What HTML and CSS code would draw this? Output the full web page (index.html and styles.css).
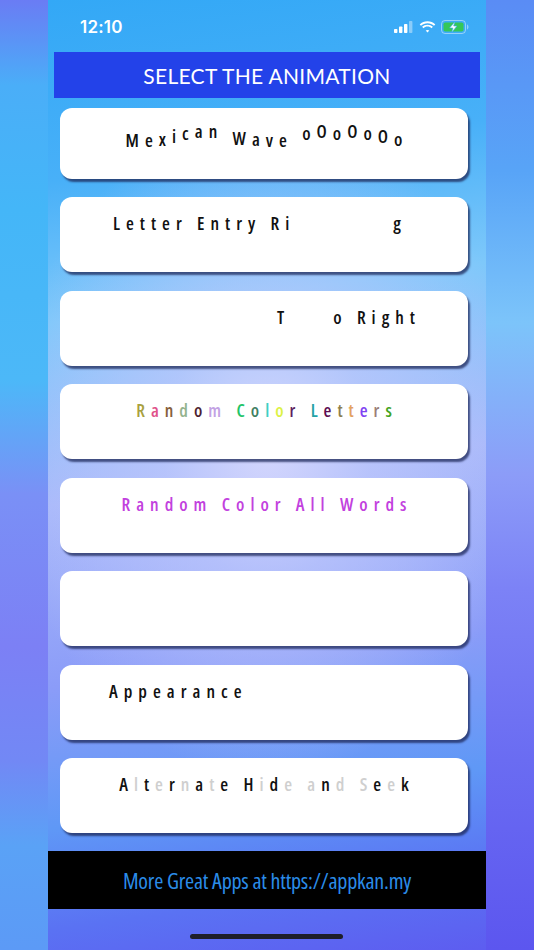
FILE: index.html
```html
<!DOCTYPE html>
<html>
<head>
<meta charset="utf-8">
<link rel="stylesheet" href="styles.css">
</head>
<body>
<div class="screen">
  <div class="column">
    <div class="status">
      <span class="time">12:10</span>
      <div class="status-icons">
        <svg class="signal" width="20" height="12" viewBox="0 0 20 12">
          <rect x="0" y="8" width="3.4" height="4" rx="0.8" fill="#fff"/>
          <rect x="5" y="5.5" width="3.4" height="6.5" rx="0.8" fill="#fff"/>
          <rect x="10" y="3" width="3.4" height="9" rx="0.8" fill="#fff"/>
          <rect x="15" y="0" width="3.4" height="12" rx="0.8" fill="#fff" fill-opacity="0.4"/>
        </svg>
        <svg class="wifi" width="17" height="12" viewBox="0 0 17 12">
          <path d="M8.5 2.2c2.5 0 4.8 1 6.5 2.6l1.3-1.4C14.2 1.4 11.5 0.2 8.5 0.2S2.8 1.4 0.7 3.4L2 4.8C3.7 3.2 6 2.2 8.5 2.2z" fill="#fff"/>
          <path d="M8.5 5.6c1.6 0 3 0.6 4.1 1.6l1.3-1.4C12.5 4.5 10.6 3.7 8.5 3.7S4.5 4.5 3.1 5.8l1.3 1.4c1.1-1 2.5-1.6 4.1-1.6z" fill="#fff"/>
          <path d="M8.5 8.9c0.7 0 1.3 0.3 1.8 0.7L8.5 11.6 6.7 9.6c0.5-0.4 1.1-0.7 1.8-0.7z" fill="#fff"/>
        </svg>
        <svg class="battery" width="29" height="14" viewBox="0 0 29 14">
          <rect x="0.5" y="0.5" width="24" height="13" rx="3.5" fill="none" stroke="#fff" stroke-opacity="0.45"/>
          <rect x="2.5" y="2.5" width="20" height="9" rx="1.8" fill="#34c759"/>
          <path d="M26 4.5v5c0.9-0.3 1.5-1.4 1.5-2.5s-0.6-2.2-1.5-2.5z" fill="#fff" fill-opacity="0.45"/>
          <path d="M13.8 1.8L8.6 8h3.3l-1.1 4.3 5.2-6.3h-3.3z" fill="#fff" stroke="#3aa9f5" stroke-width="0.6"/>
        </svg>
      </div>
    </div>

    <div class="header">SELECT THE ANIMATION</div>

    <div class="list">
      <div class="card card-first">
        <div class="label center"><span class="w5">M</span><span class="w5">e</span><span class="w4">x</span><span class="w2">i</span><span class="w1">c</span><span class="w0">a</span><span class="w0">n</span> <span class="w3">W</span><span class="w4">a</span><span class="w5">v</span><span class="w5">e</span> <span class="w1">o</span><span class="w0">O</span><span class="w1">o</span><span class="w0">O</span><span class="w1">o</span><span class="w2">O</span><span class="w4">o</span></div>
      </div>
      <div class="card">
        <div class="label pad-entry">Letter Entry Ri<span class="flyer">g</span></div>
      </div>
      <div class="card">
        <div class="label pad-tor">T<span class="gap-o">o</span> Right</div>
      </div>
      <div class="card">
        <div class="label center"><span class="c1">R</span><span class="c2">a</span><span class="c3">n</span><span class="c4">d</span><span class="c5">o</span><span class="c6">m</span> <span class="c7">C</span><span class="c8">o</span><span class="c9">l</span><span class="c10">o</span><span class="c11">r</span> <span class="c12">L</span><span class="c13">e</span><span class="c14">t</span><span class="c15">t</span><span class="c16">e</span><span class="c17">r</span><span class="c18">s</span></div>
      </div>
      <div class="card">
        <div class="label center magenta">Random Color All Words</div>
      </div>
      <div class="card"></div>
      <div class="card">
        <div class="label pad-appear">Appearance</div>
      </div>
      <div class="card">
        <div class="label center"><span>A</span><span class="lt">l</span><span>t</span><span class="lt">e</span><span>r</span><span class="lt">n</span><span>a</span><span class="lt">t</span><span>e</span> <span>H</span><span class="lt">i</span><span>d</span><span class="lt">e</span> <span class="lt">a</span><span>n</span><span class="lt">d</span> <span class="lt">S</span><span>e</span><span class="lt">e</span><span>k</span></div>
      </div>
    </div>

    <div class="footer">More Great Apps at https://appkan.my</div>
    <div class="home-area"><div class="home-bar"></div></div>
  </div>
</div>
</body>
</html>
```

FILE: styles.css
```css
html, body {
  margin: 0;
  padding: 0;
}

body {
  width: 534px;
  height: 950px;
  overflow: hidden;
}

.screen {
  width: 534px;
  height: 950px;
  background:
    linear-gradient(180deg, #6a7cf4 0%, #4aaef8 9%, #44b6f8 22%, #4cb8f8 40%, #7a90f6 52%, #7c80f5 68%, #7288f5 80%, #5aa2f6 89%, #5c9af6 100%) left top / 48px 100% no-repeat,
    linear-gradient(180deg, #5a8cf5 0%, #58a4f7 18%, #7cc4fa 34%, #8c9cf8 50%, #7c82f6 62%, #6a6cf2 80%, #5c56ef 100%) right top / 48px 100% no-repeat,
    #6a8af5;
}

.column {
  margin-left: 48px;
  width: 438px;
  height: 950px;
  display: flex;
  flex-direction: column;
  background:
    radial-gradient(ellipse 260px 330px at 50% 47%, rgba(214, 216, 253, 0.95) 0%, rgba(190, 200, 252, 0.7) 40%, rgba(150, 170, 250, 0) 100%),
    linear-gradient(172deg, #33a8f6 0%, #48b0f8 18%, #7ec8fa 32%, #a8b8fa 50%, #8b9cf8 68%, #5f98f6 82%, #5a72f3 92%, #5d5df0 100%);
}

.status {
  height: 52px;
  display: flex;
  align-items: center;
  justify-content: space-between;
  padding: 0 16px 0 32px;
  box-sizing: border-box;
  flex-shrink: 0;
}

.time {
  font-family: "Inter", "Roboto", sans-serif;
  font-weight: 600;
  font-size: 17px;
  color: #fff;
  letter-spacing: 0.2px;
  margin-top: 2px;
}

.status-icons {
  display: flex;
  align-items: center;
  gap: 5px;
  margin-top: 2px;
}

.header {
  margin: 0 6px;
  height: 46px;
  flex-shrink: 0;
  background: #2342e9;
  color: #fff;
  font-family: "Lato", "Liberation Sans", sans-serif;
  font-size: 21px;
  font-weight: 400;
  letter-spacing: 0.3px;
  display: flex;
  align-items: center;
  justify-content: center;
}

.list {
  padding: 10px 18px 0 12px;
  display: flex;
  flex-direction: column;
  gap: 18.5px;
  flex-shrink: 0;
}

.card {
  height: 75px;
  background: #fff;
  border-radius: 12px;
  box-shadow: 2px 3px 2px rgba(30, 40, 90, 0.75);
  box-sizing: border-box;
  padding-top: 15px;
}

.card-first {
  height: 70.5px;
  padding-top: 12px;
}

.label {
  font-family: "Open Sans", "DejaVu Sans", sans-serif;
  font-stretch: 87%;
  font-weight: 600;
  font-size: 18px;
  line-height: 22px;
  letter-spacing: 6px;
  color: #111;
  white-space: pre;
}

.center {
  text-align: center;
  padding-left: 6px;
}

.pad-entry { padding-left: 53px; }
.flyer { margin-left: 98px; }

.pad-tor { padding-left: 217px; }
.gap-o { margin-left: 43px; }

.pad-appear { padding-left: 49px; }

.w0 { vertical-align: 9px; }
.w1 { vertical-align: 7px; }
.w2 { vertical-align: 4px; }
.w3 { vertical-align: 2px; }
.w4 { vertical-align: 1px; }
.w5 { vertical-align: 0; }

.c1 { color: #a9a13f; }
.c2 { color: #e0528a; }
.c3 { color: #87603d; }
.c4 { color: #94b38e; }
.c5 { color: #4f1f31; }
.c6 { color: #c3a2e4; }
.c7 { color: #22c468; }
.c8 { color: #3f7f63; }
.c9 { color: #3fcfc3; }
.c10 { color: #dcf244; }
.c11 { color: #5e1f5f; }
.c12 { color: #23a3a6; }
.c13 { color: #5d0e52; }
.c14 { color: #8d7f4f; }
.c15 { color: #e3a261; }
.c16 { color: #7f42f2; }
.c17 { color: #9a7e78; }
.c18 { color: #42a322; }

.magenta { color: #c241de; }

.lt { color: #cfcfcf; }

.footer {
  margin-top: 18px;
  height: 58px;
  flex-shrink: 0;
  background: #000;
  color: #2b8ce8;
  font-family: "Open Sans", "DejaVu Sans", sans-serif;
  font-stretch: 75%;
  font-weight: 500;
  font-size: 22px;
  letter-spacing: -0.2px;
  display: flex;
  align-items: center;
  justify-content: center;
}

.home-area {
  flex: 1;
  display: flex;
  justify-content: center;
  padding-top: 25px;
  padding-right: 2px;
}

.home-bar {
  width: 153px;
  height: 5px;
  border-radius: 3px;
  background: #1e1e2a;
}
```
